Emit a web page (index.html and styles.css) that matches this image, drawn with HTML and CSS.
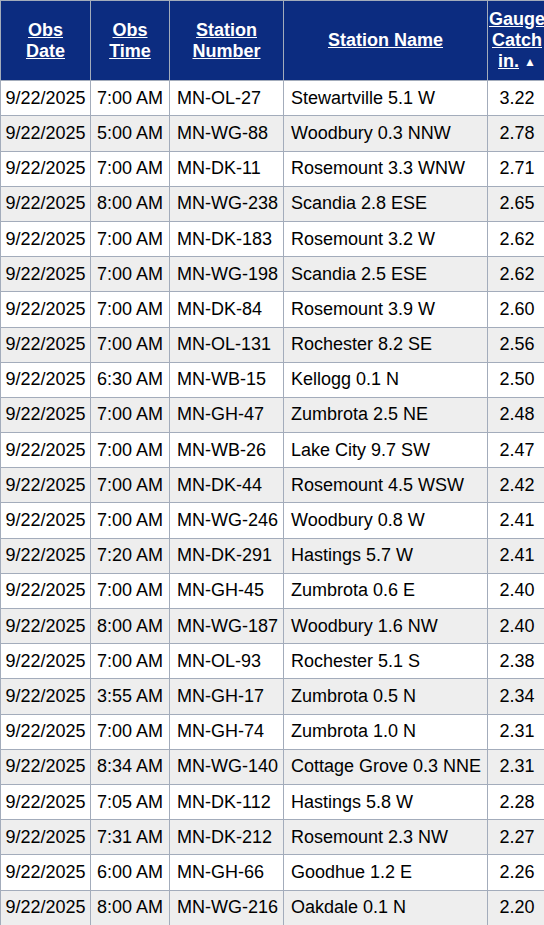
FILE: index.html
```html
<!DOCTYPE html>
<html>
<head>
<meta charset="utf-8">
<link rel="stylesheet" href="styles.css">
</head>
<body>
<div class="wrap">
<table class="obs">
<colgroup>
<col class="c-date"><col class="c-time"><col class="c-num"><col class="c-name"><col class="c-gauge">
</colgroup>
<thead>
<tr>
<th><a href="#">Obs Date</a></th>
<th><a href="#">Obs Time</a></th>
<th><a href="#">Station Number</a></th>
<th><a href="#">Station Name</a></th>
<th class="th-gauge"><a href="#">Gauge Catch in.</a> <span class="arrow">▲</span></th>
</tr>
</thead>
<tbody>
<tr><td class="ctr">9/22/2025</td><td class="ctr">7:00 AM</td><td>MN-OL-27</td><td>Stewartville 5.1 W</td><td class="ctr">3.22</td></tr>
<tr><td class="ctr">9/22/2025</td><td class="ctr">5:00 AM</td><td>MN-WG-88</td><td>Woodbury 0.3 NNW</td><td class="ctr">2.78</td></tr>
<tr><td class="ctr">9/22/2025</td><td class="ctr">7:00 AM</td><td>MN-DK-11</td><td>Rosemount 3.3 WNW</td><td class="ctr">2.71</td></tr>
<tr><td class="ctr">9/22/2025</td><td class="ctr">8:00 AM</td><td>MN-WG-238</td><td>Scandia 2.8 ESE</td><td class="ctr">2.65</td></tr>
<tr><td class="ctr">9/22/2025</td><td class="ctr">7:00 AM</td><td>MN-DK-183</td><td>Rosemount 3.2 W</td><td class="ctr">2.62</td></tr>
<tr><td class="ctr">9/22/2025</td><td class="ctr">7:00 AM</td><td>MN-WG-198</td><td>Scandia 2.5 ESE</td><td class="ctr">2.62</td></tr>
<tr><td class="ctr">9/22/2025</td><td class="ctr">7:00 AM</td><td>MN-DK-84</td><td>Rosemount 3.9 W</td><td class="ctr">2.60</td></tr>
<tr><td class="ctr">9/22/2025</td><td class="ctr">7:00 AM</td><td>MN-OL-131</td><td>Rochester 8.2 SE</td><td class="ctr">2.56</td></tr>
<tr><td class="ctr">9/22/2025</td><td class="ctr">6:30 AM</td><td>MN-WB-15</td><td>Kellogg 0.1 N</td><td class="ctr">2.50</td></tr>
<tr><td class="ctr">9/22/2025</td><td class="ctr">7:00 AM</td><td>MN-GH-47</td><td>Zumbrota 2.5 NE</td><td class="ctr">2.48</td></tr>
<tr><td class="ctr">9/22/2025</td><td class="ctr">7:00 AM</td><td>MN-WB-26</td><td>Lake City 9.7 SW</td><td class="ctr">2.47</td></tr>
<tr><td class="ctr">9/22/2025</td><td class="ctr">7:00 AM</td><td>MN-DK-44</td><td>Rosemount 4.5 WSW</td><td class="ctr">2.42</td></tr>
<tr><td class="ctr">9/22/2025</td><td class="ctr">7:00 AM</td><td>MN-WG-246</td><td>Woodbury 0.8 W</td><td class="ctr">2.41</td></tr>
<tr><td class="ctr">9/22/2025</td><td class="ctr">7:20 AM</td><td>MN-DK-291</td><td>Hastings 5.7 W</td><td class="ctr">2.41</td></tr>
<tr><td class="ctr">9/22/2025</td><td class="ctr">7:00 AM</td><td>MN-GH-45</td><td>Zumbrota 0.6 E</td><td class="ctr">2.40</td></tr>
<tr><td class="ctr">9/22/2025</td><td class="ctr">8:00 AM</td><td>MN-WG-187</td><td>Woodbury 1.6 NW</td><td class="ctr">2.40</td></tr>
<tr><td class="ctr">9/22/2025</td><td class="ctr">7:00 AM</td><td>MN-OL-93</td><td>Rochester 5.1 S</td><td class="ctr">2.38</td></tr>
<tr><td class="ctr">9/22/2025</td><td class="ctr">3:55 AM</td><td>MN-GH-17</td><td>Zumbrota 0.5 N</td><td class="ctr">2.34</td></tr>
<tr><td class="ctr">9/22/2025</td><td class="ctr">7:00 AM</td><td>MN-GH-74</td><td>Zumbrota 1.0 N</td><td class="ctr">2.31</td></tr>
<tr><td class="ctr">9/22/2025</td><td class="ctr">8:34 AM</td><td>MN-WG-140</td><td>Cottage Grove 0.3 NNE</td><td class="ctr">2.31</td></tr>
<tr><td class="ctr">9/22/2025</td><td class="ctr">7:05 AM</td><td>MN-DK-112</td><td>Hastings 5.8 W</td><td class="ctr">2.28</td></tr>
<tr><td class="ctr">9/22/2025</td><td class="ctr">7:31 AM</td><td>MN-DK-212</td><td>Rosemount 2.3 NW</td><td class="ctr">2.27</td></tr>
<tr><td class="ctr">9/22/2025</td><td class="ctr">6:00 AM</td><td>MN-GH-66</td><td>Goodhue 1.2 E</td><td class="ctr">2.26</td></tr>
<tr><td class="ctr">9/22/2025</td><td class="ctr">8:00 AM</td><td>MN-WG-216</td><td>Oakdale 0.1 N</td><td class="ctr">2.20</td></tr>
</tbody>
</table>
</div>
</body>
</html>
```

FILE: styles.css
```css
html, body {
  margin: 0;
  padding: 0;
  overflow: hidden;
  background: #ffffff;
}

.wrap {
  width: 544px;
  overflow: hidden;
}

.obs {
  border-collapse: collapse;
  table-layout: fixed;
  width: 546px;
  font-family: "Liberation Sans", Arial, sans-serif;
  font-size: 18px;
  line-height: 21px;
  color: #000000;
  border: 1px solid #a3acbb;
}

.c-date { width: 90px; }
.c-time { width: 79px; }
.c-num { width: 114px; }
.c-name { width: 204px; }
.c-gauge { width: 59px; }

.obs th {
  background: #0c2c80;
  color: #ffffff;
  font-weight: bold;
  text-align: center;
  vertical-align: middle;
  padding: 7.6px 6px;
  border: 1px solid #a3acbb;
}

.obs th.th-gauge {
  padding-left: 1px;
  padding-right: 1px;
}

.obs th a {
  color: #ffffff;
  text-decoration: underline;
}

.obs th .arrow {
  font-size: 12px;
  vertical-align: 1px;
}

.obs td {
  padding: 6.6px 7px;
  border: 1px solid #a3acbb;
  text-align: left;
  white-space: nowrap;
  overflow: hidden;
}

.obs td.ctr {
  text-align: center;
  padding-left: 1px;
  padding-right: 1px;
}

.obs tbody tr:nth-child(even) td {
  background: #eeeeee;
}
```
